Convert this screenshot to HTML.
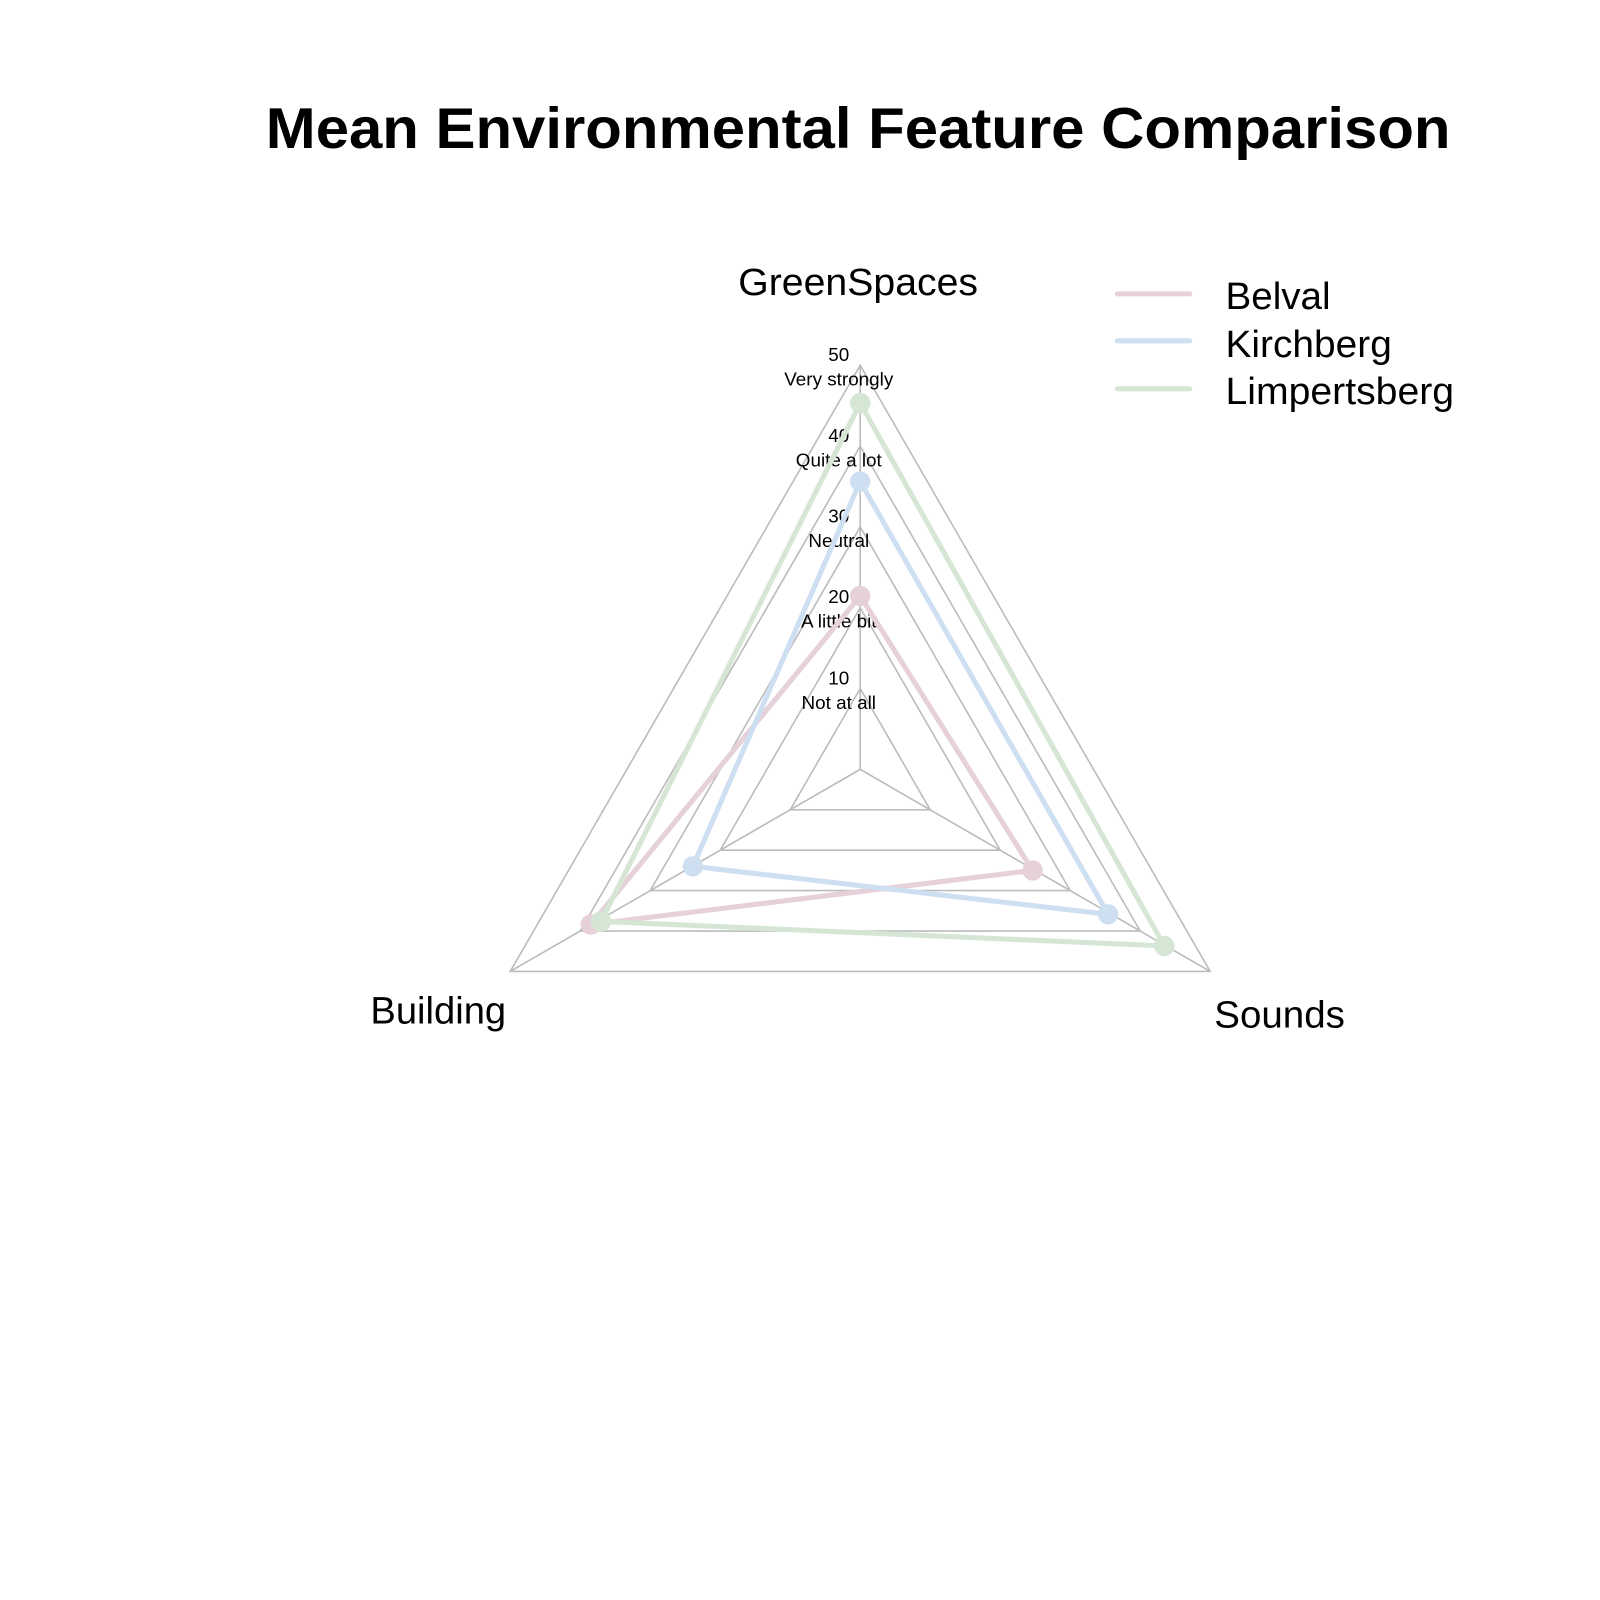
<!DOCTYPE html>
<html><head><meta charset="utf-8"><style>
html,body{margin:0;padding:0;background:#fff;}
svg{display:block;}
text{font-family:"Liberation Sans",Arial,sans-serif;fill:#000;}
</style></head><body>
<svg width="1600" height="1600" viewBox="0 0 1568 1568" xmlns="http://www.w3.org/2000/svg">
<rect width="1568" height="1568" fill="#fff"/>
<text x="841" y="145" font-size="56" font-weight="bold" text-anchor="middle" textLength="1161" lengthAdjust="spacingAndGlyphs">Mean Environmental Feature Comparison</text>
<g fill="none" stroke="#bcbcbc" stroke-width="1.6">
<polygon points="843,358 1186,952 500,952"/>
<polygon points="843,437.2 1117.4,912.4 568.6,912.4"/>
<polygon points="843,516.4 1048.8,872.8 637.2,872.8"/>
<polygon points="843,595.6 980.2,833.2 705.8,833.2"/>
<polygon points="843,674.8 911.6,793.6 774.4,793.6"/>
<line x1="843" y1="754" x2="843" y2="358"/>
<line x1="843" y1="754" x2="1186" y2="952"/>
<line x1="843" y1="754" x2="500" y2="952"/>
</g>
<g font-size="18.5" text-anchor="middle">
<text x="822" y="354">50</text><text x="822" y="378">Very strongly</text>
<text x="822" y="433">40</text><text x="822" y="457">Quite a lot</text>
<text x="822" y="512">30</text><text x="822" y="536">Neutral</text>
<text x="822" y="591">20</text><text x="822" y="615">A little bit</text>
<text x="822" y="671">10</text><text x="822" y="695">Not at all</text>
</g>
<g fill="none" stroke-width="5" stroke-linejoin="round">
<polygon stroke="#e6d1db" points="843,584 1012,853 579,906"/>
<polygon stroke="#cfdff2" points="843,472 1086,896 679,849"/>
<polygon stroke="#d5e7d4" points="843,395 1141,927 589,903"/>
</g>
<g>
<circle cx="843" cy="584" r="10" fill="#e6d1db"/><circle cx="1012" cy="853" r="10" fill="#e6d1db"/><circle cx="579" cy="906" r="10" fill="#e6d1db"/>
<circle cx="843" cy="472" r="10" fill="#cfdff2"/><circle cx="1086" cy="896" r="10" fill="#cfdff2"/><circle cx="679" cy="849" r="10" fill="#cfdff2"/>
<circle cx="843" cy="395" r="10" fill="#d5e7d4"/><circle cx="1141" cy="927" r="10" fill="#d5e7d4"/><circle cx="589" cy="903" r="10" fill="#d5e7d4"/>
</g>
<text x="841" y="289" font-size="37" text-anchor="middle" textLength="235" lengthAdjust="spacingAndGlyphs">GreenSpaces</text>
<text x="363" y="1003" font-size="37" textLength="133" lengthAdjust="spacingAndGlyphs">Building</text>
<text x="1190" y="1007" font-size="37" textLength="128" lengthAdjust="spacingAndGlyphs">Sounds</text>
<g stroke-width="5" stroke-linecap="round">
<line x1="1095" y1="288" x2="1166" y2="288" stroke="#e6d1db"/>
<line x1="1095" y1="334" x2="1166" y2="334" stroke="#cfdff2"/>
<line x1="1095" y1="381" x2="1166" y2="381" stroke="#d5e7d4"/>
</g>
<g font-size="37">
<text x="1201" y="303" textLength="103" lengthAdjust="spacingAndGlyphs">Belval</text>
<text x="1201" y="350" textLength="163" lengthAdjust="spacingAndGlyphs">Kirchberg</text>
<text x="1201" y="396" textLength="224" lengthAdjust="spacingAndGlyphs">Limpertsberg</text>
</g>
</svg>
</body></html>
